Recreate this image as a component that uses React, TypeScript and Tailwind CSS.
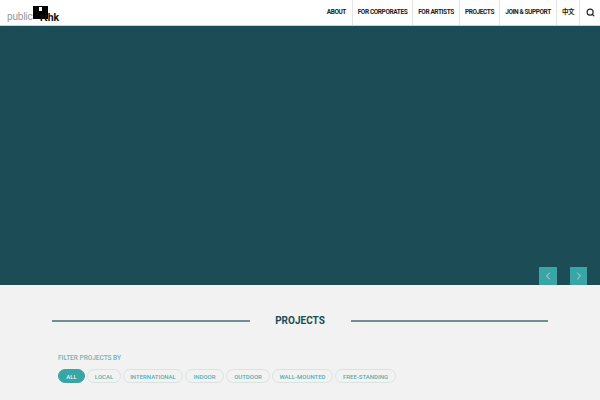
import { ChevronLeft, ChevronRight, Search } from "lucide-react";

const navItems = [
  { label: "ABOUT", width: "w-[44px] justify-end pr-[6px]" },
  { label: "FOR CORPORATES", width: "w-[60px] justify-center" },
  { label: "FOR ARTISTS", width: "w-[47px] justify-center" },
  { label: "PROJECTS", width: "w-[40px] justify-center" },
  { label: "JOIN & SUPPORT", width: "w-[57px] justify-center" },
  { label: "中文", width: "w-[23px] justify-center" },
];

const filters = [
  { label: "ALL", width: "w-[27px]" },
  { label: "LOCAL", width: "w-[34px]" },
  { label: "INTERNATIONAL", width: "w-[60px]" },
  { label: "INDOOR", width: "w-[39px]" },
  { label: "OUTDOOR", width: "w-[44px]" },
  { label: "WALL-MOUNTED", width: "w-[61px]" },
  { label: "FREE-STANDING", width: "w-[61px]" },
];

export default function App() {
  return (
    <div className="w-[600px] h-[400px] overflow-hidden bg-[#f2f2f2] font-['Roboto','Noto_Sans_CJK_SC',sans-serif]">
      {/* Header */}
      <header className="flex h-[26px] items-stretch justify-between bg-white border-b border-[#c9d3d3]">
        <div className="relative ml-[7px] w-[53px]">
          <span className="absolute left-0 top-[11px] text-[10px] leading-[12px] tracking-[-0.2px] text-[#999]">public</span>
          <div className="absolute left-[26px] top-[6px] h-[13px] w-[15px] bg-black">
            <div className="ml-[6px] mt-[1px] h-[4px] w-[3px] bg-white" />
          </div>
          <span className="absolute left-[33px] top-[12px] text-[10.5px] leading-[11px] font-bold text-[#111]">rthk</span>
        </div>
        <nav className="flex items-stretch">
          {navItems.map((item) => (
            <div
              key={item.label}
              className={`flex items-center border-r border-[#e4e4e4] pt-[1px] text-[6.5px] font-bold tracking-[-0.4px] text-[#222] ${item.width}`}
            >
              {item.label}
            </div>
          ))}
          <div className="flex w-[20px] items-center justify-center">
            <Search size={9} strokeWidth={3} className="text-[#222]" />
          </div>
        </nav>
      </header>

      {/* Hero */}
      <section className="flex h-[259px] items-end justify-end gap-[13px] bg-[#1c4c55] pr-[13px]">
        <button className="flex h-[18px] w-[18px] items-center justify-center bg-[#3aa5a5] text-[#d6f0ee]">
          <ChevronLeft size={12} strokeWidth={1.5} />
        </button>
        <button className="flex h-[18px] w-[17px] items-center justify-center bg-[#3aa5a5] text-[#d6f0ee]">
          <ChevronRight size={12} strokeWidth={1.5} />
        </button>
      </section>

      {/* Projects */}
      <section className="px-[52px] pt-[29px]">
        <div className="flex items-center">
          <div className="h-[2px] flex-1 bg-[#6f9091]" />
          <h2 className="w-[101px] text-center text-[10px] leading-[14px] font-bold text-[#1c4c55]">PROJECTS</h2>
          <div className="h-[2px] flex-1 bg-[#6f9091]" />
        </div>
        <p className="ml-[6px] mt-[25px] text-[6.5px] leading-[10px] font-medium text-[#6cb6b6]">FILTER PROJECTS BY</p>
        <div className="ml-[6px] mt-[6px] flex gap-[2px]">
          {filters.map((f, i) => (
            <span
              key={f.label}
              className={`flex h-[14px] items-center justify-center rounded-full border text-[6px] font-medium ${f.width} ${
                i === 0 ? "border-[#3aa5a5] bg-[#3aa5a5] text-[#e8f6f5]" : "border-[#d9e4e2] text-[#55afaf]"
              }`}
            >
              {f.label}
            </span>
          ))}
        </div>
      </section>
    </div>
  );
}
